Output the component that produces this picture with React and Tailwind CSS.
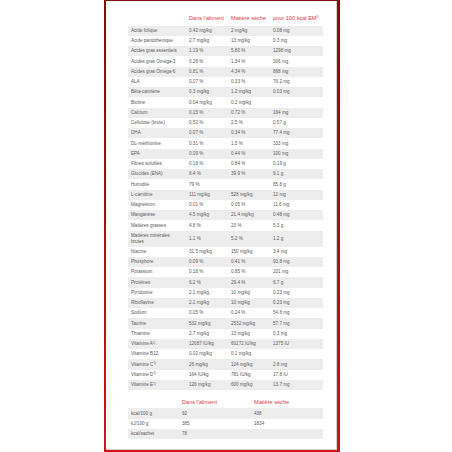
import React from "react";

const rows = [
  ["Acide folique", "0.42 mg/kg", "2 mg/kg", "0.08 mg"],
  ["Acide pantothénique", "2.7 mg/kg", "13 mg/kg", "0.3 mg"],
  ["Acides gras essentiels", "1.19 %", "5.80 %", "1298 mg"],
  ["Acides gras Oméga-3", "0.28 %", "1.34 %", "306 mg"],
  ["Acides gras Oméga-6", "0.81 %", "4.34 %", "868 mg"],
  ["ALA", "0.07 %", "0.33 %", "76.2 mg"],
  ["Bêta-carotène", "0.3 mg/kg", "1.2 mg/kg", "0.03 mg"],
  ["Biotine", "0.04 mg/kg", "0.2 mg/kg", ""],
  ["Calcium", "0.15 %", "0.72 %", "164 mg"],
  ["Cellulose (brute)", "0.52 %", "2.5 %", "0.57 g"],
  ["DHA", "0.07 %", "0.34 %", "77.4 mg"],
  ["DL-méthionine", "0.31 %", "1.5 %", "333 mg"],
  ["EPA", "0.09 %", "0.44 %", "100 mg"],
  ["Fibres solubles", "0.18 %", "0.84 %", "0.19 g"],
  ["Glucides (ENA)", "8.4 %", "39.9 %", "9.1 g"],
  ["Humidité", "79 %", "", "85.8 g"],
  ["L-carnitine", "111 mg/kg", "528 mg/kg", "12 mg"],
  ["Magnésium", "0.01 %", "0.05 %", "11.6 mg"],
  ["Manganèse", "4.5 mg/kg", "21.4 mg/kg", "0.48 mg"],
  ["Matières grasses", "4.8 %", "23 %", "5.3 g"],
  ["Matières minérales brutes", "1.1 %", "5.2 %", "1.2 g"],
  ["Niacine", "31.5 mg/kg", "150 mg/kg", "3.4 mg"],
  ["Phosphore", "0.09 %", "0.41 %", "93.8 mg"],
  ["Potassium", "0.18 %", "0.85 %", "201 mg"],
  ["Protéines", "6.2 %", "29.4 %", "6.7 g"],
  ["Pyridoxine", "2.1 mg/kg", "10 mg/kg", "0.23 mg"],
  ["Riboflavine", "2.1 mg/kg", "10 mg/kg", "0.23 mg"],
  ["Sodium", "0.05 %", "0.24 %", "54.8 mg"],
  ["Taurine", "532 mg/kg", "2532 mg/kg", "57.7 mg"],
  ["Thiamine", "2.7 mg/kg", "13 mg/kg", "0.3 mg"],
  ["Vitamine A", "12687 IU/kg", "60272 IU/kg", "1375 IU", true],
  ["Vitamine B12", "0.02 mg/kg", "0.1 mg/kg", ""],
  ["Vitamine C", "26 mg/kg", "124 mg/kg", "2.8 mg", true],
  ["Vitamine D", "164 IU/kg", "781 IU/kg", "17.8 IU", true],
  ["Vitamine E", "126 mg/kg", "600 mg/kg", "13.7 mg", true],
];

const energy = [
  ["kcal/100 g", "92", "438"],
  ["kJ/100 g", "385", "1834"],
  ["kcal/sachet", "78", ""],
];

const font = { fontFamily: '"Liberation Sans", Arial, sans-serif' };

export default function App() {
  return (
    <div className="w-[452px] h-[452px] bg-white" style={font}>
      <div className="ml-[104px] w-[236px] h-[452px] bg-gradient-to-b from-[#870b0b] to-[#d01414] pl-[1.5px] pt-[1px] pr-[2.7px] pb-[2.3px]">
        <div className="h-full bg-white border-r border-b border-[#d4d4d4] pl-[22.5px] pt-[14px]">
          <div className="w-[195px]">
            <div className="grid grid-cols-[58px_42px_42px_53px] text-[5.6px] leading-[6px] text-[#e2394c] mb-[4px]">
              <div />
              <div className="pl-[3px] whitespace-nowrap">Dans l'aliment</div>
              <div className="pl-[3px] whitespace-nowrap">Matière sèche</div>
              <div className="pl-[3px] whitespace-nowrap">
                pour 100 kcal EM<sup className="text-[3.6px] leading-none">5</sup>
              </div>
            </div>
            {rows.map((r, i) => (
              <div
                key={r[0]}
                className={`grid grid-cols-[58px_42px_42px_53px] items-center py-[2.25px] text-[4.6px] leading-[5.75px] text-[#5a5a5a] ${
                  i % 2 === 0 ? "bg-[#ededed]" : "bg-white"
                }`}
              >
                <div className="pl-[3px] pr-[6px]">
                  {r[0]}
                  {r[4] && <sup className="text-[3px] leading-none">1)</sup>}
                </div>
                <div className="pl-[3px] whitespace-nowrap">{r[1]}</div>
                <div className="pl-[3px] whitespace-nowrap">{r[2]}</div>
                <div className="pl-[3px] whitespace-nowrap">{r[3]}</div>
              </div>
            ))}

            <div className="grid grid-cols-[51px_72px_72px] text-[5.6px] leading-[6px] text-[#e2394c] mt-[8.5px] mb-[3.7px]">
              <div />
              <div className="pl-[3px] whitespace-nowrap">Dans l'aliment</div>
              <div className="pl-[3px] whitespace-nowrap">Matière sèche</div>
            </div>
            {energy.map((r, i) => (
              <div
                key={r[0]}
                className={`grid grid-cols-[51px_72px_72px] items-center py-[2.25px] text-[4.6px] leading-[5.75px] text-[#5a5a5a] ${
                  i % 2 === 0 ? "bg-[#ededed]" : "bg-white"
                }`}
              >
                <div className="pl-[3px] whitespace-nowrap">{r[0]}</div>
                <div className="pl-[3px]">{r[1]}</div>
                <div className="pl-[3px]">{r[2]}</div>
              </div>
            ))}
          </div>
        </div>
      </div>
    </div>
  );
}
